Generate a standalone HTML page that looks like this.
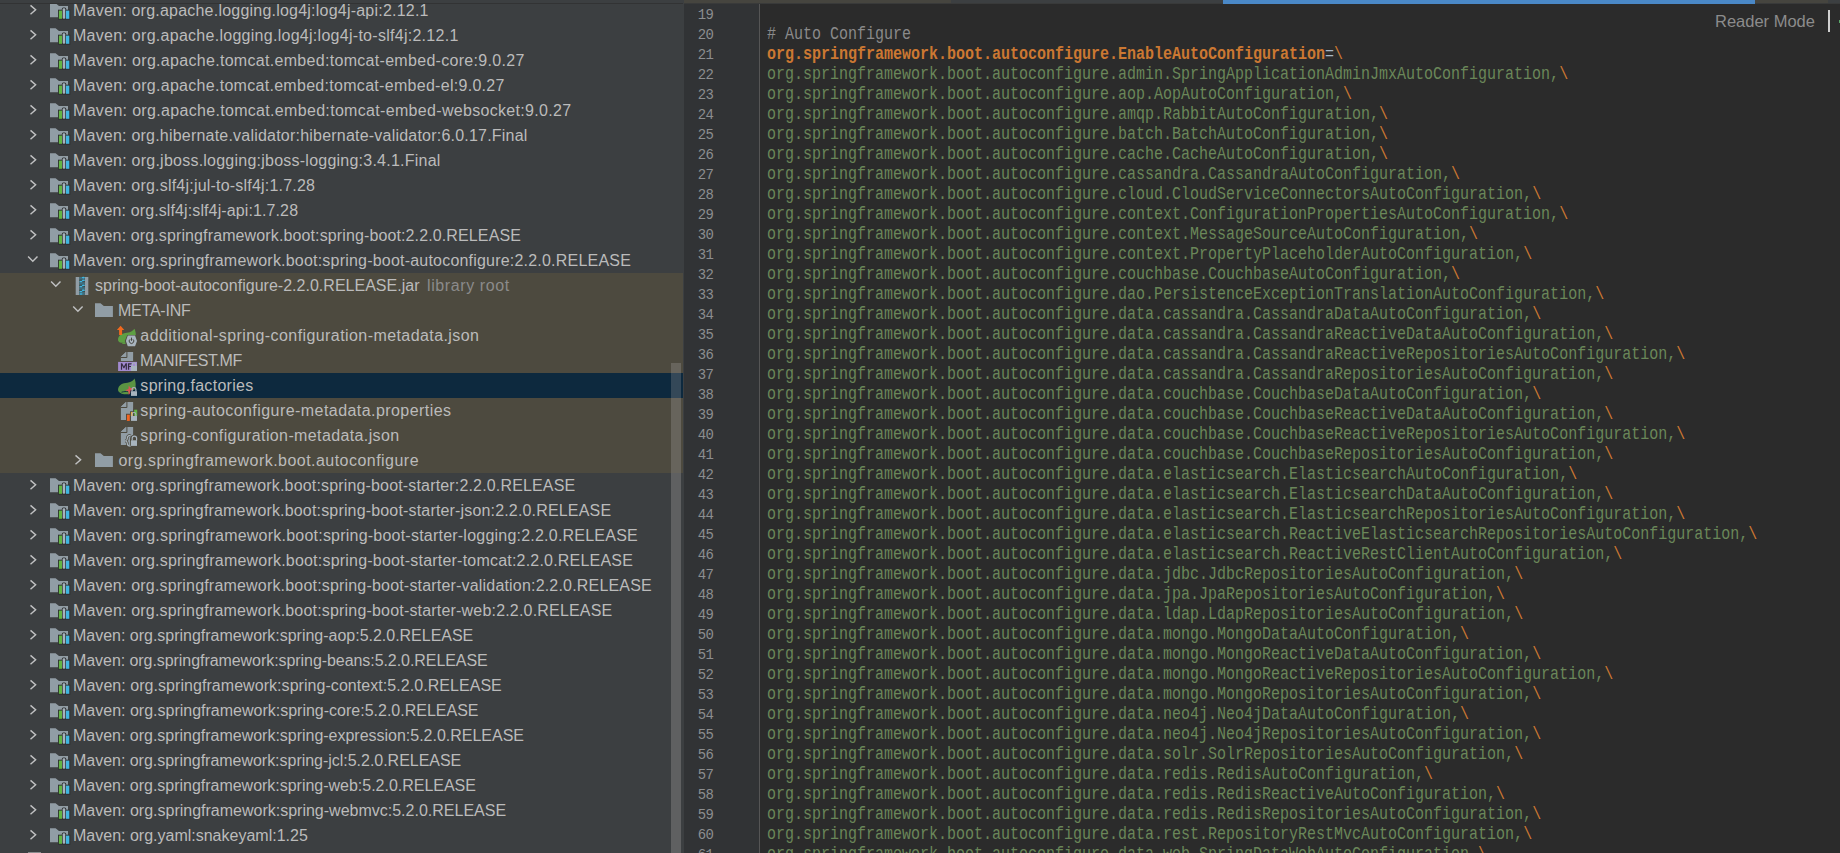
<!DOCTYPE html>
<html><head><meta charset="utf-8"><style>
*{margin:0;padding:0;box-sizing:border-box}
html,body{width:1840px;height:853px;overflow:hidden;background:#2B2B2B;position:relative}
#tree{position:absolute;left:0;top:0;width:684px;height:853px;background:#3C3F41;overflow:hidden}
.libbg{position:absolute;left:0;top:273px;width:683px;height:200px;background:#4D4A3F}
.row{position:absolute;left:0;width:683px;height:25px}
.row.sel{background:#0D293E}
.rs{position:absolute;left:0;top:0;display:block}
.tt{position:absolute;top:0.3px;height:25px;line-height:25px;font-family:"Liberation Sans",sans-serif;font-size:16px;color:#BBBBBB;white-space:nowrap}
.tt.lr{color:#8B8B8B}
#sb{position:absolute;left:671px;top:363px;width:10px;height:490px;background:#5F6061}
#sbsel{position:absolute;left:671px;top:373px;width:10px;height:25px;background:#344858}
#sbtop{position:absolute;left:671px;top:363px;width:10px;height:10px;background:#67645C}
#sbtop2{position:absolute;left:671px;top:398px;width:10px;height:75px;background:#67645C}
#gutter{position:absolute;left:684px;top:4px;width:75px;height:849px;background:#313335}
#sep{position:absolute;left:759px;top:4px;width:1px;height:849px;background:#555555}
.ln{position:absolute;left:-11px;width:40px;text-align:right;height:20px;line-height:20px;font-family:"Liberation Mono",monospace;font-size:15.5px;letter-spacing:-0.9px;color:#8C8E90;white-space:nowrap;transform:scaleX(0.9);transform-origin:100% 0}
#code{position:absolute;left:760px;top:4px;width:1080px;height:849px;background:#2B2B2B}
.cl{position:absolute;left:7px;height:20px;line-height:20px;font-family:"Liberation Mono",monospace;font-size:17.5px;transform:scaleX(0.85714);transform-origin:0 0;white-space:pre;margin-top:0px}
.cm{color:#8A8A8A}
.k{color:#CC7832;font-weight:bold}
.eq{color:#A9B7C6}
.bs{color:#CC7832}
.v{color:#6A8759}
#reader{position:absolute;left:1715px;top:11px;font-family:"Liberation Sans",sans-serif;font-size:16.5px;color:#8C8C8C;white-space:nowrap;line-height:20px}
</style></head><body>
<div id="tree">
<div class="libbg"></div>
<div class="row" style="top:-2px"><svg class="rs" width="140" height="25" viewBox="0 0 140 25"><path d="M30.5 7.4L35.6 11.8L30.5 16.2" stroke="#C0C1C2" stroke-width="1.45" fill="none"/><path d="M50 5.3H55.6L59 8.1H68V19.2H50Z" fill="#919DA5"/><rect x="58" y="11.7" width="5" height="10" fill="#2E3031"/><rect x="61.8" y="9.4" width="4.4" height="12.3" rx="1.5" fill="#2E3031"/><rect x="65" y="11.7" width="5.3" height="10" fill="#2E3031"/><rect x="58.9" y="12.6" width="3.1" height="8.2" fill="#62B543"/><rect x="62.7" y="10.3" width="2.5" height="10.5" rx="1" fill="#A7B3BC"/><rect x="65.9" y="12.6" width="3.4" height="8.2" fill="#40B6E0"/></svg><div class="tt" style="left:73.00px;letter-spacing:0.221px">Maven: org.apache.logging.log4j:log4j-api:2.12.1</div></div><div class="row" style="top:23px"><svg class="rs" width="140" height="25" viewBox="0 0 140 25"><path d="M30.5 7.4L35.6 11.8L30.5 16.2" stroke="#C0C1C2" stroke-width="1.45" fill="none"/><path d="M50 5.3H55.6L59 8.1H68V19.2H50Z" fill="#919DA5"/><rect x="58" y="11.7" width="5" height="10" fill="#2E3031"/><rect x="61.8" y="9.4" width="4.4" height="12.3" rx="1.5" fill="#2E3031"/><rect x="65" y="11.7" width="5.3" height="10" fill="#2E3031"/><rect x="58.9" y="12.6" width="3.1" height="8.2" fill="#62B543"/><rect x="62.7" y="10.3" width="2.5" height="10.5" rx="1" fill="#A7B3BC"/><rect x="65.9" y="12.6" width="3.4" height="8.2" fill="#40B6E0"/></svg><div class="tt" style="left:73.00px;letter-spacing:0.277px">Maven: org.apache.logging.log4j:log4j-to-slf4j:2.12.1</div></div><div class="row" style="top:48px"><svg class="rs" width="140" height="25" viewBox="0 0 140 25"><path d="M30.5 7.4L35.6 11.8L30.5 16.2" stroke="#C0C1C2" stroke-width="1.45" fill="none"/><path d="M50 5.3H55.6L59 8.1H68V19.2H50Z" fill="#919DA5"/><rect x="58" y="11.7" width="5" height="10" fill="#2E3031"/><rect x="61.8" y="9.4" width="4.4" height="12.3" rx="1.5" fill="#2E3031"/><rect x="65" y="11.7" width="5.3" height="10" fill="#2E3031"/><rect x="58.9" y="12.6" width="3.1" height="8.2" fill="#62B543"/><rect x="62.7" y="10.3" width="2.5" height="10.5" rx="1" fill="#A7B3BC"/><rect x="65.9" y="12.6" width="3.4" height="8.2" fill="#40B6E0"/></svg><div class="tt" style="left:73.00px;letter-spacing:0.304px">Maven: org.apache.tomcat.embed:tomcat-embed-core:9.0.27</div></div><div class="row" style="top:73px"><svg class="rs" width="140" height="25" viewBox="0 0 140 25"><path d="M30.5 7.4L35.6 11.8L30.5 16.2" stroke="#C0C1C2" stroke-width="1.45" fill="none"/><path d="M50 5.3H55.6L59 8.1H68V19.2H50Z" fill="#919DA5"/><rect x="58" y="11.7" width="5" height="10" fill="#2E3031"/><rect x="61.8" y="9.4" width="4.4" height="12.3" rx="1.5" fill="#2E3031"/><rect x="65" y="11.7" width="5.3" height="10" fill="#2E3031"/><rect x="58.9" y="12.6" width="3.1" height="8.2" fill="#62B543"/><rect x="62.7" y="10.3" width="2.5" height="10.5" rx="1" fill="#A7B3BC"/><rect x="65.9" y="12.6" width="3.4" height="8.2" fill="#40B6E0"/></svg><div class="tt" style="left:73.00px;letter-spacing:0.292px">Maven: org.apache.tomcat.embed:tomcat-embed-el:9.0.27</div></div><div class="row" style="top:98px"><svg class="rs" width="140" height="25" viewBox="0 0 140 25"><path d="M30.5 7.4L35.6 11.8L30.5 16.2" stroke="#C0C1C2" stroke-width="1.45" fill="none"/><path d="M50 5.3H55.6L59 8.1H68V19.2H50Z" fill="#919DA5"/><rect x="58" y="11.7" width="5" height="10" fill="#2E3031"/><rect x="61.8" y="9.4" width="4.4" height="12.3" rx="1.5" fill="#2E3031"/><rect x="65" y="11.7" width="5.3" height="10" fill="#2E3031"/><rect x="58.9" y="12.6" width="3.1" height="8.2" fill="#62B543"/><rect x="62.7" y="10.3" width="2.5" height="10.5" rx="1" fill="#A7B3BC"/><rect x="65.9" y="12.6" width="3.4" height="8.2" fill="#40B6E0"/></svg><div class="tt" style="left:73.00px;letter-spacing:0.319px">Maven: org.apache.tomcat.embed:tomcat-embed-websocket:9.0.27</div></div><div class="row" style="top:123px"><svg class="rs" width="140" height="25" viewBox="0 0 140 25"><path d="M30.5 7.4L35.6 11.8L30.5 16.2" stroke="#C0C1C2" stroke-width="1.45" fill="none"/><path d="M50 5.3H55.6L59 8.1H68V19.2H50Z" fill="#919DA5"/><rect x="58" y="11.7" width="5" height="10" fill="#2E3031"/><rect x="61.8" y="9.4" width="4.4" height="12.3" rx="1.5" fill="#2E3031"/><rect x="65" y="11.7" width="5.3" height="10" fill="#2E3031"/><rect x="58.9" y="12.6" width="3.1" height="8.2" fill="#62B543"/><rect x="62.7" y="10.3" width="2.5" height="10.5" rx="1" fill="#A7B3BC"/><rect x="65.9" y="12.6" width="3.4" height="8.2" fill="#40B6E0"/></svg><div class="tt" style="left:73.00px;letter-spacing:0.213px">Maven: org.hibernate.validator:hibernate-validator:6.0.17.Final</div></div><div class="row" style="top:148px"><svg class="rs" width="140" height="25" viewBox="0 0 140 25"><path d="M30.5 7.4L35.6 11.8L30.5 16.2" stroke="#C0C1C2" stroke-width="1.45" fill="none"/><path d="M50 5.3H55.6L59 8.1H68V19.2H50Z" fill="#919DA5"/><rect x="58" y="11.7" width="5" height="10" fill="#2E3031"/><rect x="61.8" y="9.4" width="4.4" height="12.3" rx="1.5" fill="#2E3031"/><rect x="65" y="11.7" width="5.3" height="10" fill="#2E3031"/><rect x="58.9" y="12.6" width="3.1" height="8.2" fill="#62B543"/><rect x="62.7" y="10.3" width="2.5" height="10.5" rx="1" fill="#A7B3BC"/><rect x="65.9" y="12.6" width="3.4" height="8.2" fill="#40B6E0"/></svg><div class="tt" style="left:73.00px;letter-spacing:0.237px">Maven: org.jboss.logging:jboss-logging:3.4.1.Final</div></div><div class="row" style="top:173px"><svg class="rs" width="140" height="25" viewBox="0 0 140 25"><path d="M30.5 7.4L35.6 11.8L30.5 16.2" stroke="#C0C1C2" stroke-width="1.45" fill="none"/><path d="M50 5.3H55.6L59 8.1H68V19.2H50Z" fill="#919DA5"/><rect x="58" y="11.7" width="5" height="10" fill="#2E3031"/><rect x="61.8" y="9.4" width="4.4" height="12.3" rx="1.5" fill="#2E3031"/><rect x="65" y="11.7" width="5.3" height="10" fill="#2E3031"/><rect x="58.9" y="12.6" width="3.1" height="8.2" fill="#62B543"/><rect x="62.7" y="10.3" width="2.5" height="10.5" rx="1" fill="#A7B3BC"/><rect x="65.9" y="12.6" width="3.4" height="8.2" fill="#40B6E0"/></svg><div class="tt" style="left:73.00px;letter-spacing:0.206px">Maven: org.slf4j:jul-to-slf4j:1.7.28</div></div><div class="row" style="top:198px"><svg class="rs" width="140" height="25" viewBox="0 0 140 25"><path d="M30.5 7.4L35.6 11.8L30.5 16.2" stroke="#C0C1C2" stroke-width="1.45" fill="none"/><path d="M50 5.3H55.6L59 8.1H68V19.2H50Z" fill="#919DA5"/><rect x="58" y="11.7" width="5" height="10" fill="#2E3031"/><rect x="61.8" y="9.4" width="4.4" height="12.3" rx="1.5" fill="#2E3031"/><rect x="65" y="11.7" width="5.3" height="10" fill="#2E3031"/><rect x="58.9" y="12.6" width="3.1" height="8.2" fill="#62B543"/><rect x="62.7" y="10.3" width="2.5" height="10.5" rx="1" fill="#A7B3BC"/><rect x="65.9" y="12.6" width="3.4" height="8.2" fill="#40B6E0"/></svg><div class="tt" style="left:73.00px;letter-spacing:0.112px">Maven: org.slf4j:slf4j-api:1.7.28</div></div><div class="row" style="top:223px"><svg class="rs" width="140" height="25" viewBox="0 0 140 25"><path d="M30.5 7.4L35.6 11.8L30.5 16.2" stroke="#C0C1C2" stroke-width="1.45" fill="none"/><path d="M50 5.3H55.6L59 8.1H68V19.2H50Z" fill="#919DA5"/><rect x="58" y="11.7" width="5" height="10" fill="#2E3031"/><rect x="61.8" y="9.4" width="4.4" height="12.3" rx="1.5" fill="#2E3031"/><rect x="65" y="11.7" width="5.3" height="10" fill="#2E3031"/><rect x="58.9" y="12.6" width="3.1" height="8.2" fill="#62B543"/><rect x="62.7" y="10.3" width="2.5" height="10.5" rx="1" fill="#A7B3BC"/><rect x="65.9" y="12.6" width="3.4" height="8.2" fill="#40B6E0"/></svg><div class="tt" style="left:73.00px;letter-spacing:0.121px">Maven: org.springframework.boot:spring-boot:2.2.0.RELEASE</div></div><div class="row" style="top:248px"><svg class="rs" width="140" height="25" viewBox="0 0 140 25"><path d="M28.1 8.6L32.8 13.3L37.5 8.6" stroke="#C0C1C2" stroke-width="1.45" fill="none"/><path d="M50 5.3H55.6L59 8.1H68V19.2H50Z" fill="#919DA5"/><rect x="58" y="11.7" width="5" height="10" fill="#2E3031"/><rect x="61.8" y="9.4" width="4.4" height="12.3" rx="1.5" fill="#2E3031"/><rect x="65" y="11.7" width="5.3" height="10" fill="#2E3031"/><rect x="58.9" y="12.6" width="3.1" height="8.2" fill="#62B543"/><rect x="62.7" y="10.3" width="2.5" height="10.5" rx="1" fill="#A7B3BC"/><rect x="65.9" y="12.6" width="3.4" height="8.2" fill="#40B6E0"/></svg><div class="tt" style="left:73.00px;letter-spacing:0.206px">Maven: org.springframework.boot:spring-boot-autoconfigure:2.2.0.RELEASE</div></div><div class="row" style="top:273px"><svg class="rs" width="140" height="25" viewBox="0 0 140 25"><path d="M51.1 8.6L55.8 13.3L60.5 8.6" stroke="#C0C1C2" stroke-width="1.45" fill="none"/><rect x="75.7" y="4" width="3.7" height="18" fill="#919DA5"/><rect x="84.8" y="4" width="3.5" height="18" fill="#919DA5"/><rect x="79.4" y="4" width="5.4" height="18" fill="#3E6F80"/><rect x="79.4" y="6.7" width="2.7" height="1" fill="#3F3B33"/><rect x="79.4" y="11.8" width="2.7" height="1" fill="#3F3B33"/><rect x="79.4" y="16.8" width="2.7" height="1" fill="#3F3B33"/><rect x="82.1" y="8.1" width="2.7" height="1" fill="#3F3B33"/><rect x="82.1" y="13.1" width="2.7" height="1" fill="#3F3B33"/><rect x="82.1" y="17.9" width="2.7" height="1" fill="#3F3B33"/><ellipse cx="81" cy="8.5" rx="1.5" ry="0.8" fill="#40B6E0"/><ellipse cx="81" cy="13.5" rx="1.5" ry="0.8" fill="#40B6E0"/><ellipse cx="81" cy="18.5" rx="1.5" ry="0.8" fill="#40B6E0"/><ellipse cx="81" cy="21.0" rx="1.5" ry="0.8" fill="#40B6E0"/><ellipse cx="83.3" cy="4.6" rx="1.5" ry="0.8" fill="#40B6E0"/><ellipse cx="83.3" cy="7.5" rx="1.5" ry="0.8" fill="#40B6E0"/><ellipse cx="83.3" cy="12.5" rx="1.5" ry="0.8" fill="#40B6E0"/><ellipse cx="83.3" cy="17.4" rx="1.5" ry="0.8" fill="#40B6E0"/></svg><div class="tt" style="left:95.00px;letter-spacing:0.019px">spring-boot-autoconfigure-2.2.0.RELEASE.jar</div><div class="tt lr" style="left:427px;letter-spacing:0.6px">library root</div></div><div class="row" style="top:298px"><svg class="rs" width="140" height="25" viewBox="0 0 140 25"><path d="M73.2 8.6L77.9 13.3L82.6 8.6" stroke="#C0C1C2" stroke-width="1.45" fill="none"/><path d="M95 5.3H100.5L103.8 7.9H112.9V19H95Z" fill="#919DA5"/></svg><div class="tt" style="left:118.00px;letter-spacing:-0.229px">META-INF</div></div><div class="row" style="top:323px"><svg class="rs" width="140" height="25" viewBox="0 0 140 25"><path d="M118 17C118 12.5 122 10.3 127 9.8C131 9.3 133 7.6 134.5 5.8C135.6 8.5 136 11 135.8 13L126 19.5C122 20.2 118.2 19.8 118 17Z" fill="#5E9F43"/><ellipse cx="124" cy="20.3" rx="2" ry="0.7" fill="#5E9F43"/><path d="M116.9 7L120.6 2.8L124.3 7H122.1V11.9H119.1V7Z" fill="#F0691E"/><path d="M124.8 17.9L127.3 12.0H135.5L138.1 17.9L135.5 23.8H127.3Z" fill="#4D4A3F"/><path d="M125.9 17.9L127.8 12.6H135.0L137.0 17.9L135.0 23.2H127.8Z" fill="#A8B4BE"/><path d="M130.1 16.3A2.3 2.3 0 1 0 132.9 16.3" stroke="#46443E" stroke-width="1" fill="none"/><rect x="131" y="14.6" width="1" height="3.2" fill="#46443E"/></svg><div class="tt" style="left:140.35px;letter-spacing:0.418px">additional-spring-configuration-metadata.json</div></div><div class="row" style="top:348px"><svg class="rs" width="140" height="25" viewBox="0 0 140 25"><path d="M127 4H133.1V12.9H120.9V8.8L126 4Z" fill="#919DA5"/><path d="M120.9 9.5H126.9V4" stroke="#4D4A3F" stroke-width="1" fill="none"/><path d="M120.9 8.8L126 4V8.8Z" fill="#919DA5"/><rect x="118.1" y="13.9" width="18.9" height="9.1" fill="#A28AD0"/><path d="M120.9 21.7V15.3H122.2L123.9 18.6L125.6 15.3H126.9V21.7H125.7V17.4L124.3 20.2H123.5L122.1 17.4V21.7Z" fill="#352C40"/><path d="M127.9 21.7V15.3H131.6V16.4H129.2V18H131.2V19.1H129.2V21.7Z" fill="#352C40"/><rect x="131" y="17.9" width="6" height="5.1" fill="#A8B4BE"/><path d="M132.2 18V16.5A1.8 1.8 0 0 1 135.8 16.5V18" stroke="#A8B4BE" stroke-width="1.1" fill="none"/></svg><div class="tt" style="left:140.00px;letter-spacing:-0.440px">MANIFEST.MF</div></div><div class="row sel" style="top:373px"><svg class="rs" width="140" height="25" viewBox="0 0 140 25"><path d="M118 16.5C118.5 12 122.5 10.2 127.5 9.8C131.5 9.2 133.5 7.5 134.6 5.6C135.8 9 136.2 13 135 16L128 21.3C124 21.5 121.5 21 121 20.3C119 19.5 118 18.3 118 16.5Z" fill="#5A9442"/><path d="M121.5 19.2C124 18.5 126 18.3 128 18.6" stroke="#0D293E" stroke-width="0.9" fill="none"/><path d="M128.7 12.6L130.8 15.3L134.2 14.4L132.3 17.3L134.2 20.2L130.8 19.3L128.7 22.0L128.5 18.5L125.3 17.3L128.5 16.1Z" fill="#D95555"/><rect x="130.3" y="17.4" width="7.4" height="6.2" fill="#0D293E"/><rect x="131" y="18.2" width="6" height="4.7" fill="#A8B4BE"/><path d="M132.1 18.3V16.4A1.9 1.9 0 0 1 135.9 16.4V18.3" stroke="#A8B4BE" stroke-width="1.2" fill="none"/></svg><div class="tt" style="left:140.35px;letter-spacing:0.293px">spring.factories</div></div><div class="row" style="top:398px"><svg class="rs" width="140" height="25" viewBox="0 0 140 25"><path d="M127 4H133.1V22H120.9V8.8L126 4Z" fill="#919DA5"/><path d="M120.9 9.5H126.9V4" stroke="#4D4A3F" stroke-width="1" fill="none"/><path d="M120.9 8.8L126 4V8.8Z" fill="#919DA5"/><path d="M126 23.5V15.8H130V13.2H133.5V10.8H137.5V23.5Z" fill="#4D4A3F"/><rect x="126.9" y="16.7" width="2.9" height="6.2" fill="#F26522"/><rect x="130.9" y="14.1" width="2" height="4.1" fill="#F4AF3D"/><rect x="134.2" y="11.7" width="3" height="6.2" fill="#62B543"/><rect x="131" y="18" width="6" height="4.9" fill="#A8B4BE"/><path d="M132.1 18.2V16.4A1.9 1.9 0 0 1 135.9 16.4V18.2" stroke="#A8B4BE" stroke-width="1.1" fill="none"/></svg><div class="tt" style="left:140.35px;letter-spacing:0.441px">spring-autoconfigure-metadata.properties</div></div><div class="row" style="top:423px"><svg class="rs" width="140" height="25" viewBox="0 0 140 25"><path d="M127 4H133.1V22H120.9V8.8L126 4Z" fill="#919DA5"/><path d="M120.9 9.5H126.9V4" stroke="#4D4A3F" stroke-width="1" fill="none"/><path d="M120.9 8.8L126 4V8.8Z" fill="#919DA5"/><path d="M130.6 12.3C128 12.3 127.4 13.2 127.4 15C127.4 16.8 127 17.5 125.4 17.9C127 18.3 127.4 19 127.4 20.8C127.4 22.6 128 23.2 130.6 23.2" stroke="#4D4A3F" stroke-width="2.6" fill="none"/><path d="M131.6 18V15.2A3 3 0 0 1 137.2 15.2V18" stroke="#4D4A3F" stroke-width="3" fill="none"/><rect x="130.2" y="16.4" width="7.6" height="7.2" fill="#4D4A3F"/><path d="M130.6 12.3C128 12.3 127.4 13.2 127.4 15C127.4 16.8 127 17.5 125.4 17.9C127 18.3 127.4 19 127.4 20.8C127.4 22.6 128 23.2 130.6 23.2" stroke="#A8B4BE" stroke-width="1.2" fill="none"/><rect x="131" y="17.3" width="6" height="5.6" fill="#A8B4BE"/><path d="M132.2 17.6V15.3A2.2 2.2 0 0 1 136.6 15.3V17.6" stroke="#A8B4BE" stroke-width="1.2" fill="none"/></svg><div class="tt" style="left:140.35px;letter-spacing:0.376px">spring-configuration-metadata.json</div></div><div class="row" style="top:448px"><svg class="rs" width="140" height="25" viewBox="0 0 140 25"><path d="M75.5 7.4L80.6 11.8L75.5 16.2" stroke="#C0C1C2" stroke-width="1.45" fill="none"/><path d="M95 5.3H100.5L103.8 7.9H112.9V19H95Z" fill="#919DA5"/></svg><div class="tt" style="left:118.50px;letter-spacing:0.465px">org.springframework.boot.autoconfigure</div></div><div class="row" style="top:473px"><svg class="rs" width="140" height="25" viewBox="0 0 140 25"><path d="M30.5 7.4L35.6 11.8L30.5 16.2" stroke="#C0C1C2" stroke-width="1.45" fill="none"/><path d="M50 5.3H55.6L59 8.1H68V19.2H50Z" fill="#919DA5"/><rect x="58" y="11.7" width="5" height="10" fill="#2E3031"/><rect x="61.8" y="9.4" width="4.4" height="12.3" rx="1.5" fill="#2E3031"/><rect x="65" y="11.7" width="5.3" height="10" fill="#2E3031"/><rect x="58.9" y="12.6" width="3.1" height="8.2" fill="#62B543"/><rect x="62.7" y="10.3" width="2.5" height="10.5" rx="1" fill="#A7B3BC"/><rect x="65.9" y="12.6" width="3.4" height="8.2" fill="#40B6E0"/></svg><div class="tt" style="left:73.00px;letter-spacing:0.163px">Maven: org.springframework.boot:spring-boot-starter:2.2.0.RELEASE</div></div><div class="row" style="top:498px"><svg class="rs" width="140" height="25" viewBox="0 0 140 25"><path d="M30.5 7.4L35.6 11.8L30.5 16.2" stroke="#C0C1C2" stroke-width="1.45" fill="none"/><path d="M50 5.3H55.6L59 8.1H68V19.2H50Z" fill="#919DA5"/><rect x="58" y="11.7" width="5" height="10" fill="#2E3031"/><rect x="61.8" y="9.4" width="4.4" height="12.3" rx="1.5" fill="#2E3031"/><rect x="65" y="11.7" width="5.3" height="10" fill="#2E3031"/><rect x="58.9" y="12.6" width="3.1" height="8.2" fill="#62B543"/><rect x="62.7" y="10.3" width="2.5" height="10.5" rx="1" fill="#A7B3BC"/><rect x="65.9" y="12.6" width="3.4" height="8.2" fill="#40B6E0"/></svg><div class="tt" style="left:73.00px;letter-spacing:0.168px">Maven: org.springframework.boot:spring-boot-starter-json:2.2.0.RELEASE</div></div><div class="row" style="top:523px"><svg class="rs" width="140" height="25" viewBox="0 0 140 25"><path d="M30.5 7.4L35.6 11.8L30.5 16.2" stroke="#C0C1C2" stroke-width="1.45" fill="none"/><path d="M50 5.3H55.6L59 8.1H68V19.2H50Z" fill="#919DA5"/><rect x="58" y="11.7" width="5" height="10" fill="#2E3031"/><rect x="61.8" y="9.4" width="4.4" height="12.3" rx="1.5" fill="#2E3031"/><rect x="65" y="11.7" width="5.3" height="10" fill="#2E3031"/><rect x="58.9" y="12.6" width="3.1" height="8.2" fill="#62B543"/><rect x="62.7" y="10.3" width="2.5" height="10.5" rx="1" fill="#A7B3BC"/><rect x="65.9" y="12.6" width="3.4" height="8.2" fill="#40B6E0"/></svg><div class="tt" style="left:73.00px;letter-spacing:0.222px">Maven: org.springframework.boot:spring-boot-starter-logging:2.2.0.RELEASE</div></div><div class="row" style="top:548px"><svg class="rs" width="140" height="25" viewBox="0 0 140 25"><path d="M30.5 7.4L35.6 11.8L30.5 16.2" stroke="#C0C1C2" stroke-width="1.45" fill="none"/><path d="M50 5.3H55.6L59 8.1H68V19.2H50Z" fill="#919DA5"/><rect x="58" y="11.7" width="5" height="10" fill="#2E3031"/><rect x="61.8" y="9.4" width="4.4" height="12.3" rx="1.5" fill="#2E3031"/><rect x="65" y="11.7" width="5.3" height="10" fill="#2E3031"/><rect x="58.9" y="12.6" width="3.1" height="8.2" fill="#62B543"/><rect x="62.7" y="10.3" width="2.5" height="10.5" rx="1" fill="#A7B3BC"/><rect x="65.9" y="12.6" width="3.4" height="8.2" fill="#40B6E0"/></svg><div class="tt" style="left:73.00px;letter-spacing:0.208px">Maven: org.springframework.boot:spring-boot-starter-tomcat:2.2.0.RELEASE</div></div><div class="row" style="top:573px"><svg class="rs" width="140" height="25" viewBox="0 0 140 25"><path d="M30.5 7.4L35.6 11.8L30.5 16.2" stroke="#C0C1C2" stroke-width="1.45" fill="none"/><path d="M50 5.3H55.6L59 8.1H68V19.2H50Z" fill="#919DA5"/><rect x="58" y="11.7" width="5" height="10" fill="#2E3031"/><rect x="61.8" y="9.4" width="4.4" height="12.3" rx="1.5" fill="#2E3031"/><rect x="65" y="11.7" width="5.3" height="10" fill="#2E3031"/><rect x="58.9" y="12.6" width="3.1" height="8.2" fill="#62B543"/><rect x="62.7" y="10.3" width="2.5" height="10.5" rx="1" fill="#A7B3BC"/><rect x="65.9" y="12.6" width="3.4" height="8.2" fill="#40B6E0"/></svg><div class="tt" style="left:73.00px;letter-spacing:0.187px">Maven: org.springframework.boot:spring-boot-starter-validation:2.2.0.RELEASE</div></div><div class="row" style="top:598px"><svg class="rs" width="140" height="25" viewBox="0 0 140 25"><path d="M30.5 7.4L35.6 11.8L30.5 16.2" stroke="#C0C1C2" stroke-width="1.45" fill="none"/><path d="M50 5.3H55.6L59 8.1H68V19.2H50Z" fill="#919DA5"/><rect x="58" y="11.7" width="5" height="10" fill="#2E3031"/><rect x="61.8" y="9.4" width="4.4" height="12.3" rx="1.5" fill="#2E3031"/><rect x="65" y="11.7" width="5.3" height="10" fill="#2E3031"/><rect x="58.9" y="12.6" width="3.1" height="8.2" fill="#62B543"/><rect x="62.7" y="10.3" width="2.5" height="10.5" rx="1" fill="#A7B3BC"/><rect x="65.9" y="12.6" width="3.4" height="8.2" fill="#40B6E0"/></svg><div class="tt" style="left:73.00px;letter-spacing:0.188px">Maven: org.springframework.boot:spring-boot-starter-web:2.2.0.RELEASE</div></div><div class="row" style="top:623px"><svg class="rs" width="140" height="25" viewBox="0 0 140 25"><path d="M30.5 7.4L35.6 11.8L30.5 16.2" stroke="#C0C1C2" stroke-width="1.45" fill="none"/><path d="M50 5.3H55.6L59 8.1H68V19.2H50Z" fill="#919DA5"/><rect x="58" y="11.7" width="5" height="10" fill="#2E3031"/><rect x="61.8" y="9.4" width="4.4" height="12.3" rx="1.5" fill="#2E3031"/><rect x="65" y="11.7" width="5.3" height="10" fill="#2E3031"/><rect x="58.9" y="12.6" width="3.1" height="8.2" fill="#62B543"/><rect x="62.7" y="10.3" width="2.5" height="10.5" rx="1" fill="#A7B3BC"/><rect x="65.9" y="12.6" width="3.4" height="8.2" fill="#40B6E0"/></svg><div class="tt" style="left:73.00px;letter-spacing:-0.016px">Maven: org.springframework:spring-aop:5.2.0.RELEASE</div></div><div class="row" style="top:648px"><svg class="rs" width="140" height="25" viewBox="0 0 140 25"><path d="M30.5 7.4L35.6 11.8L30.5 16.2" stroke="#C0C1C2" stroke-width="1.45" fill="none"/><path d="M50 5.3H55.6L59 8.1H68V19.2H50Z" fill="#919DA5"/><rect x="58" y="11.7" width="5" height="10" fill="#2E3031"/><rect x="61.8" y="9.4" width="4.4" height="12.3" rx="1.5" fill="#2E3031"/><rect x="65" y="11.7" width="5.3" height="10" fill="#2E3031"/><rect x="58.9" y="12.6" width="3.1" height="8.2" fill="#62B543"/><rect x="62.7" y="10.3" width="2.5" height="10.5" rx="1" fill="#A7B3BC"/><rect x="65.9" y="12.6" width="3.4" height="8.2" fill="#40B6E0"/></svg><div class="tt" style="left:73.00px;letter-spacing:-0.062px">Maven: org.springframework:spring-beans:5.2.0.RELEASE</div></div><div class="row" style="top:673px"><svg class="rs" width="140" height="25" viewBox="0 0 140 25"><path d="M30.5 7.4L35.6 11.8L30.5 16.2" stroke="#C0C1C2" stroke-width="1.45" fill="none"/><path d="M50 5.3H55.6L59 8.1H68V19.2H50Z" fill="#919DA5"/><rect x="58" y="11.7" width="5" height="10" fill="#2E3031"/><rect x="61.8" y="9.4" width="4.4" height="12.3" rx="1.5" fill="#2E3031"/><rect x="65" y="11.7" width="5.3" height="10" fill="#2E3031"/><rect x="58.9" y="12.6" width="3.1" height="8.2" fill="#62B543"/><rect x="62.7" y="10.3" width="2.5" height="10.5" rx="1" fill="#A7B3BC"/><rect x="65.9" y="12.6" width="3.4" height="8.2" fill="#40B6E0"/></svg><div class="tt" style="left:73.00px;letter-spacing:0.052px">Maven: org.springframework:spring-context:5.2.0.RELEASE</div></div><div class="row" style="top:698px"><svg class="rs" width="140" height="25" viewBox="0 0 140 25"><path d="M30.5 7.4L35.6 11.8L30.5 16.2" stroke="#C0C1C2" stroke-width="1.45" fill="none"/><path d="M50 5.3H55.6L59 8.1H68V19.2H50Z" fill="#919DA5"/><rect x="58" y="11.7" width="5" height="10" fill="#2E3031"/><rect x="61.8" y="9.4" width="4.4" height="12.3" rx="1.5" fill="#2E3031"/><rect x="65" y="11.7" width="5.3" height="10" fill="#2E3031"/><rect x="58.9" y="12.6" width="3.1" height="8.2" fill="#62B543"/><rect x="62.7" y="10.3" width="2.5" height="10.5" rx="1" fill="#A7B3BC"/><rect x="65.9" y="12.6" width="3.4" height="8.2" fill="#40B6E0"/></svg><div class="tt" style="left:73.00px;letter-spacing:0.000px">Maven: org.springframework:spring-core:5.2.0.RELEASE</div></div><div class="row" style="top:723px"><svg class="rs" width="140" height="25" viewBox="0 0 140 25"><path d="M30.5 7.4L35.6 11.8L30.5 16.2" stroke="#C0C1C2" stroke-width="1.45" fill="none"/><path d="M50 5.3H55.6L59 8.1H68V19.2H50Z" fill="#919DA5"/><rect x="58" y="11.7" width="5" height="10" fill="#2E3031"/><rect x="61.8" y="9.4" width="4.4" height="12.3" rx="1.5" fill="#2E3031"/><rect x="65" y="11.7" width="5.3" height="10" fill="#2E3031"/><rect x="58.9" y="12.6" width="3.1" height="8.2" fill="#62B543"/><rect x="62.7" y="10.3" width="2.5" height="10.5" rx="1" fill="#A7B3BC"/><rect x="65.9" y="12.6" width="3.4" height="8.2" fill="#40B6E0"/></svg><div class="tt" style="left:73.00px;letter-spacing:-0.014px">Maven: org.springframework:spring-expression:5.2.0.RELEASE</div></div><div class="row" style="top:748px"><svg class="rs" width="140" height="25" viewBox="0 0 140 25"><path d="M30.5 7.4L35.6 11.8L30.5 16.2" stroke="#C0C1C2" stroke-width="1.45" fill="none"/><path d="M50 5.3H55.6L59 8.1H68V19.2H50Z" fill="#919DA5"/><rect x="58" y="11.7" width="5" height="10" fill="#2E3031"/><rect x="61.8" y="9.4" width="4.4" height="12.3" rx="1.5" fill="#2E3031"/><rect x="65" y="11.7" width="5.3" height="10" fill="#2E3031"/><rect x="58.9" y="12.6" width="3.1" height="8.2" fill="#62B543"/><rect x="62.7" y="10.3" width="2.5" height="10.5" rx="1" fill="#A7B3BC"/><rect x="65.9" y="12.6" width="3.4" height="8.2" fill="#40B6E0"/></svg><div class="tt" style="left:73.00px;letter-spacing:-0.024px">Maven: org.springframework:spring-jcl:5.2.0.RELEASE</div></div><div class="row" style="top:773px"><svg class="rs" width="140" height="25" viewBox="0 0 140 25"><path d="M30.5 7.4L35.6 11.8L30.5 16.2" stroke="#C0C1C2" stroke-width="1.45" fill="none"/><path d="M50 5.3H55.6L59 8.1H68V19.2H50Z" fill="#919DA5"/><rect x="58" y="11.7" width="5" height="10" fill="#2E3031"/><rect x="61.8" y="9.4" width="4.4" height="12.3" rx="1.5" fill="#2E3031"/><rect x="65" y="11.7" width="5.3" height="10" fill="#2E3031"/><rect x="58.9" y="12.6" width="3.1" height="8.2" fill="#62B543"/><rect x="62.7" y="10.3" width="2.5" height="10.5" rx="1" fill="#A7B3BC"/><rect x="65.9" y="12.6" width="3.4" height="8.2" fill="#40B6E0"/></svg><div class="tt" style="left:73.00px;letter-spacing:-0.016px">Maven: org.springframework:spring-web:5.2.0.RELEASE</div></div><div class="row" style="top:798px"><svg class="rs" width="140" height="25" viewBox="0 0 140 25"><path d="M30.5 7.4L35.6 11.8L30.5 16.2" stroke="#C0C1C2" stroke-width="1.45" fill="none"/><path d="M50 5.3H55.6L59 8.1H68V19.2H50Z" fill="#919DA5"/><rect x="58" y="11.7" width="5" height="10" fill="#2E3031"/><rect x="61.8" y="9.4" width="4.4" height="12.3" rx="1.5" fill="#2E3031"/><rect x="65" y="11.7" width="5.3" height="10" fill="#2E3031"/><rect x="58.9" y="12.6" width="3.1" height="8.2" fill="#62B543"/><rect x="62.7" y="10.3" width="2.5" height="10.5" rx="1" fill="#A7B3BC"/><rect x="65.9" y="12.6" width="3.4" height="8.2" fill="#40B6E0"/></svg><div class="tt" style="left:73.00px;letter-spacing:0.000px">Maven: org.springframework:spring-webmvc:5.2.0.RELEASE</div></div><div class="row" style="top:823px"><svg class="rs" width="140" height="25" viewBox="0 0 140 25"><path d="M30.5 7.4L35.6 11.8L30.5 16.2" stroke="#C0C1C2" stroke-width="1.45" fill="none"/><path d="M50 5.3H55.6L59 8.1H68V19.2H50Z" fill="#919DA5"/><rect x="58" y="11.7" width="5" height="10" fill="#2E3031"/><rect x="61.8" y="9.4" width="4.4" height="12.3" rx="1.5" fill="#2E3031"/><rect x="65" y="11.7" width="5.3" height="10" fill="#2E3031"/><rect x="58.9" y="12.6" width="3.1" height="8.2" fill="#62B543"/><rect x="62.7" y="10.3" width="2.5" height="10.5" rx="1" fill="#A7B3BC"/><rect x="65.9" y="12.6" width="3.4" height="8.2" fill="#40B6E0"/></svg><div class="tt" style="left:73.00px;letter-spacing:0.000px">Maven: org.yaml:snakeyaml:1.25</div></div>
<div style="position:absolute;left:0;top:0;width:683px;height:3px;background:#3C3F41"></div>
<div style="position:absolute;left:0;top:3px;width:683px;height:1px;background:#323334"></div>
<div id="sb"></div><div id="sbtop"></div><div id="sbsel"></div><div id="sbtop2"></div>
<div style="position:absolute;left:28px;top:852px;width:13px;height:1px;background:#8A8C8E"></div>
</div>
<div id="gutter"><div class="ln" style="top:1px">19</div><div class="ln" style="top:21px">20</div><div class="ln" style="top:41px">21</div><div class="ln" style="top:61px">22</div><div class="ln" style="top:81px">23</div><div class="ln" style="top:101px">24</div><div class="ln" style="top:121px">25</div><div class="ln" style="top:141px">26</div><div class="ln" style="top:161px">27</div><div class="ln" style="top:181px">28</div><div class="ln" style="top:201px">29</div><div class="ln" style="top:221px">30</div><div class="ln" style="top:241px">31</div><div class="ln" style="top:261px">32</div><div class="ln" style="top:281px">33</div><div class="ln" style="top:301px">34</div><div class="ln" style="top:321px">35</div><div class="ln" style="top:341px">36</div><div class="ln" style="top:361px">37</div><div class="ln" style="top:381px">38</div><div class="ln" style="top:401px">39</div><div class="ln" style="top:421px">40</div><div class="ln" style="top:441px">41</div><div class="ln" style="top:461px">42</div><div class="ln" style="top:481px">43</div><div class="ln" style="top:501px">44</div><div class="ln" style="top:521px">45</div><div class="ln" style="top:541px">46</div><div class="ln" style="top:561px">47</div><div class="ln" style="top:581px">48</div><div class="ln" style="top:601px">49</div><div class="ln" style="top:621px">50</div><div class="ln" style="top:641px">51</div><div class="ln" style="top:661px">52</div><div class="ln" style="top:681px">53</div><div class="ln" style="top:701px">54</div><div class="ln" style="top:721px">55</div><div class="ln" style="top:741px">56</div><div class="ln" style="top:761px">57</div><div class="ln" style="top:781px">58</div><div class="ln" style="top:801px">59</div><div class="ln" style="top:821px">60</div><div class="ln" style="top:841px">61</div></div>
<div id="code"><div class="cl" style="top:0px"></div><div class="cl" style="top:20px"><span class="cm"># Auto Configure</span></div><div class="cl" style="top:40px"><span class="k">org.springframework.boot.autoconfigure.EnableAutoConfiguration</span><span class="eq">=</span><span class="bs">\</span></div><div class="cl" style="top:60px"><span class="v">org.springframework.boot.autoconfigure.admin.SpringApplicationAdminJmxAutoConfiguration,</span><span class="bs">\</span></div><div class="cl" style="top:80px"><span class="v">org.springframework.boot.autoconfigure.aop.AopAutoConfiguration,</span><span class="bs">\</span></div><div class="cl" style="top:100px"><span class="v">org.springframework.boot.autoconfigure.amqp.RabbitAutoConfiguration,</span><span class="bs">\</span></div><div class="cl" style="top:120px"><span class="v">org.springframework.boot.autoconfigure.batch.BatchAutoConfiguration,</span><span class="bs">\</span></div><div class="cl" style="top:140px"><span class="v">org.springframework.boot.autoconfigure.cache.CacheAutoConfiguration,</span><span class="bs">\</span></div><div class="cl" style="top:160px"><span class="v">org.springframework.boot.autoconfigure.cassandra.CassandraAutoConfiguration,</span><span class="bs">\</span></div><div class="cl" style="top:180px"><span class="v">org.springframework.boot.autoconfigure.cloud.CloudServiceConnectorsAutoConfiguration,</span><span class="bs">\</span></div><div class="cl" style="top:200px"><span class="v">org.springframework.boot.autoconfigure.context.ConfigurationPropertiesAutoConfiguration,</span><span class="bs">\</span></div><div class="cl" style="top:220px"><span class="v">org.springframework.boot.autoconfigure.context.MessageSourceAutoConfiguration,</span><span class="bs">\</span></div><div class="cl" style="top:240px"><span class="v">org.springframework.boot.autoconfigure.context.PropertyPlaceholderAutoConfiguration,</span><span class="bs">\</span></div><div class="cl" style="top:260px"><span class="v">org.springframework.boot.autoconfigure.couchbase.CouchbaseAutoConfiguration,</span><span class="bs">\</span></div><div class="cl" style="top:280px"><span class="v">org.springframework.boot.autoconfigure.dao.PersistenceExceptionTranslationAutoConfiguration,</span><span class="bs">\</span></div><div class="cl" style="top:300px"><span class="v">org.springframework.boot.autoconfigure.data.cassandra.CassandraDataAutoConfiguration,</span><span class="bs">\</span></div><div class="cl" style="top:320px"><span class="v">org.springframework.boot.autoconfigure.data.cassandra.CassandraReactiveDataAutoConfiguration,</span><span class="bs">\</span></div><div class="cl" style="top:340px"><span class="v">org.springframework.boot.autoconfigure.data.cassandra.CassandraReactiveRepositoriesAutoConfiguration,</span><span class="bs">\</span></div><div class="cl" style="top:360px"><span class="v">org.springframework.boot.autoconfigure.data.cassandra.CassandraRepositoriesAutoConfiguration,</span><span class="bs">\</span></div><div class="cl" style="top:380px"><span class="v">org.springframework.boot.autoconfigure.data.couchbase.CouchbaseDataAutoConfiguration,</span><span class="bs">\</span></div><div class="cl" style="top:400px"><span class="v">org.springframework.boot.autoconfigure.data.couchbase.CouchbaseReactiveDataAutoConfiguration,</span><span class="bs">\</span></div><div class="cl" style="top:420px"><span class="v">org.springframework.boot.autoconfigure.data.couchbase.CouchbaseReactiveRepositoriesAutoConfiguration,</span><span class="bs">\</span></div><div class="cl" style="top:440px"><span class="v">org.springframework.boot.autoconfigure.data.couchbase.CouchbaseRepositoriesAutoConfiguration,</span><span class="bs">\</span></div><div class="cl" style="top:460px"><span class="v">org.springframework.boot.autoconfigure.data.elasticsearch.ElasticsearchAutoConfiguration,</span><span class="bs">\</span></div><div class="cl" style="top:480px"><span class="v">org.springframework.boot.autoconfigure.data.elasticsearch.ElasticsearchDataAutoConfiguration,</span><span class="bs">\</span></div><div class="cl" style="top:500px"><span class="v">org.springframework.boot.autoconfigure.data.elasticsearch.ElasticsearchRepositoriesAutoConfiguration,</span><span class="bs">\</span></div><div class="cl" style="top:520px"><span class="v">org.springframework.boot.autoconfigure.data.elasticsearch.ReactiveElasticsearchRepositoriesAutoConfiguration,</span><span class="bs">\</span></div><div class="cl" style="top:540px"><span class="v">org.springframework.boot.autoconfigure.data.elasticsearch.ReactiveRestClientAutoConfiguration,</span><span class="bs">\</span></div><div class="cl" style="top:560px"><span class="v">org.springframework.boot.autoconfigure.data.jdbc.JdbcRepositoriesAutoConfiguration,</span><span class="bs">\</span></div><div class="cl" style="top:580px"><span class="v">org.springframework.boot.autoconfigure.data.jpa.JpaRepositoriesAutoConfiguration,</span><span class="bs">\</span></div><div class="cl" style="top:600px"><span class="v">org.springframework.boot.autoconfigure.data.ldap.LdapRepositoriesAutoConfiguration,</span><span class="bs">\</span></div><div class="cl" style="top:620px"><span class="v">org.springframework.boot.autoconfigure.data.mongo.MongoDataAutoConfiguration,</span><span class="bs">\</span></div><div class="cl" style="top:640px"><span class="v">org.springframework.boot.autoconfigure.data.mongo.MongoReactiveDataAutoConfiguration,</span><span class="bs">\</span></div><div class="cl" style="top:660px"><span class="v">org.springframework.boot.autoconfigure.data.mongo.MongoReactiveRepositoriesAutoConfiguration,</span><span class="bs">\</span></div><div class="cl" style="top:680px"><span class="v">org.springframework.boot.autoconfigure.data.mongo.MongoRepositoriesAutoConfiguration,</span><span class="bs">\</span></div><div class="cl" style="top:700px"><span class="v">org.springframework.boot.autoconfigure.data.neo4j.Neo4jDataAutoConfiguration,</span><span class="bs">\</span></div><div class="cl" style="top:720px"><span class="v">org.springframework.boot.autoconfigure.data.neo4j.Neo4jRepositoriesAutoConfiguration,</span><span class="bs">\</span></div><div class="cl" style="top:740px"><span class="v">org.springframework.boot.autoconfigure.data.solr.SolrRepositoriesAutoConfiguration,</span><span class="bs">\</span></div><div class="cl" style="top:760px"><span class="v">org.springframework.boot.autoconfigure.data.redis.RedisAutoConfiguration,</span><span class="bs">\</span></div><div class="cl" style="top:780px"><span class="v">org.springframework.boot.autoconfigure.data.redis.RedisReactiveAutoConfiguration,</span><span class="bs">\</span></div><div class="cl" style="top:800px"><span class="v">org.springframework.boot.autoconfigure.data.redis.RedisRepositoriesAutoConfiguration,</span><span class="bs">\</span></div><div class="cl" style="top:820px"><span class="v">org.springframework.boot.autoconfigure.data.rest.RepositoryRestMvcAutoConfiguration,</span><span class="bs">\</span></div><div class="cl" style="top:840px"><span class="v">org.springframework.boot.autoconfigure.data.web.SpringDataWebAutoConfiguration,</span><span class="bs">\</span></div></div>
<div id="sep"></div>
<div style="position:absolute;left:684px;top:0;width:267px;height:3px;background:#46453F"></div>
<div style="position:absolute;left:951px;top:0;width:272px;height:3px;background:#3C3F41"></div>
<div style="position:absolute;left:684px;top:3px;width:539px;height:1px;background:#393A3A"></div>
<div style="position:absolute;left:1223px;top:0;width:532px;height:4px;background:#4A88C7"></div>
<div style="position:absolute;left:1755px;top:0;width:73px;height:3px;background:#46453F"></div>
<div style="position:absolute;left:1828px;top:0;width:12px;height:3px;background:#3C3F41"></div>
<div style="position:absolute;left:1755px;top:3px;width:85px;height:1px;background:#393A3A"></div>
<div id="reader">Reader Mode</div>
<div style="position:absolute;left:1828px;top:10px;width:2px;height:22px;background:#D0D0D0"></div>
<div style="position:absolute;left:1839px;top:20px;width:1px;height:3px;background:#59A869"></div>
</body></html>
